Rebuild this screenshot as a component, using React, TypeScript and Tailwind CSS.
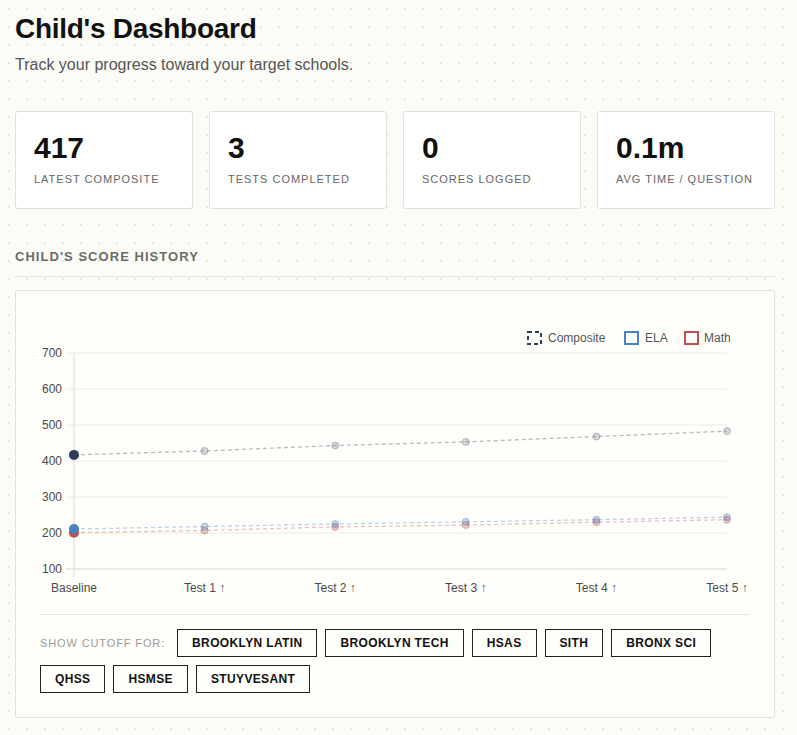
import React from "react"

const stats = [
  { value: "417", label: "Latest Composite" },
  { value: "3", label: "Tests Completed" },
  { value: "0", label: "Scores Logged" },
  { value: "0.1m", label: "Avg Time / Question" },
]

const labels = ["Baseline", "Test 1 ↑", "Test 2 ↑", "Test 3 ↑", "Test 4 ↑", "Test 5 ↑"]
const composite = [417, 428, 443, 453, 468, 483]
const ela = [211, 218, 225, 231, 237, 244]
const math = [201, 207, 217, 222, 230, 237]

const schools = ["Brooklyn Latin", "Brooklyn Tech", "HSAS", "SITH", "Bronx Sci", "QHSS", "HSMSE", "Stuyvesant"]

const x0 = 34
const x1 = 687
const xs = labels.map((_, i) => x0 + ((x1 - x0) * i) / 5)
const yOf = (v: number) => 38 + (700 - v) * 0.36

function Series({ data, color, opacity = 0.35 }: { data: number[]; color: string; opacity?: number }) {
  const pts = data.map((v, i) => `${xs[i]},${yOf(v)}`).join(" ")
  return (
    <g>
      <polyline points={pts} fill="none" stroke={color} strokeOpacity={opacity} strokeWidth={1.3} strokeDasharray="4 3" />
      {data.slice(1).map((v, i) => (
        <circle key={i} cx={xs[i + 1]} cy={yOf(v)} r={3.5} fill={color} fillOpacity={0.3} stroke={color} strokeOpacity={0.4} />
      ))}
    </g>
  )
}

function ScoreChart() {
  const font = { fontFamily: '"Liberation Sans", Arial, sans-serif' }
  return (
    <svg width="710" height="286" viewBox="0 0 710 286" style={font} className="block">
      {/* legend */}
      <g fontSize="12" fill="#555">
        <rect x="488" y="17" width="13" height="12" fill="none" stroke="#2f3e56" strokeWidth="2" strokeDasharray="4 3" />
        <text x="508" y="27">Composite</text>
        <rect x="585" y="17" width="13" height="12" fill="#fff" stroke="#4a7fc1" strokeWidth="2" />
        <text x="605" y="27">ELA</text>
        <rect x="645" y="17" width="13" height="12" fill="#fff" stroke="#c0504d" strokeWidth="2" />
        <text x="664" y="27">Math</text>
      </g>

      {/* grid */}
      {[700, 600, 500, 400, 300, 200, 100].map((v) => (
        <g key={v}>
          <line x1={x0 - 8} x2={x1} y1={yOf(v)} y2={yOf(v)} stroke={v === 100 ? "#d4d4d0" : "#ebebe6"} strokeWidth="1" />
          <text x="22" y={yOf(v) + 4} fontSize="12" fill="#4a4a4a" textAnchor="end">
            {v}
          </text>
        </g>
      ))}
      <line x1={x0} x2={x0} y1={yOf(700)} y2={yOf(100) + 8} stroke="#dcdcd8" strokeWidth="1" />

      {/* x labels */}
      {labels.map((l, i) => (
        <text key={l} x={xs[i]} y="277" fontSize="12" fill="#4a4a4a" textAnchor="middle">
          {l}
        </text>
      ))}

      <Series data={math} color="#c0504d" />
      <Series data={ela} color="#4a7fc1" />
      <Series data={composite} color="#6f7888" opacity={0.5} />

      <circle cx={xs[0]} cy={yOf(math[0])} r={5} fill="#c0504d" />
      <circle cx={xs[0]} cy={yOf(ela[0])} r={5} fill="#4a7fc1" />
      <circle cx={xs[0]} cy={yOf(composite[0])} r={5} fill="#2f3e56" />
    </svg>
  )
}

export default function App() {
  return (
    <div className="min-h-screen bg-[#fcfcf6] bg-[radial-gradient(#e6e6dc_1px,transparent_1px)] bg-[length:18px_18px] font-['Liberation_Sans',Arial,sans-serif] text-[#111]">
      <div className="px-[15px] pt-3 pb-4 w-[790px]">
        <h1 className="text-[28px] leading-[34px] font-bold tracking-[-0.01em] text-[#111]">Child's Dashboard</h1>
        <p className="mt-[7px] text-[16px] leading-6 text-[#555]">Track your progress toward your target schools.</p>

        <div className="mt-[34px] grid grid-cols-4 gap-4 w-[760px]">
          {stats.map((s) => (
            <div key={s.label} className="bg-white border border-[#e2e2dd] rounded-[3px] px-[18px] pt-[21px] pb-[21px]">
              <div className="text-[30px] leading-[30px] font-bold text-[#111]">{s.value}</div>
              <div className="mt-2 text-[11px] leading-4 uppercase tracking-[0.09em] text-[#666]">{s.label}</div>
            </div>
          ))}
        </div>

        <div className="mt-10 w-[760px] border-b border-[#e4e4de] pb-[11px]">
          <h2 className="text-[13px] leading-4 font-bold uppercase tracking-[0.08em] text-[#6b6b66]">Child's Score History</h2>
        </div>

        <div className="mt-[13px] w-[760px] bg-[#fefefa] border border-[#e2e2dd] rounded-[3px] px-6 pt-6 pb-6">
          <ScoreChart />
          <div className="mt-[13px] border-t border-[#e6e6e0] pt-[14px] flex flex-wrap items-center gap-x-2 gap-y-2">
            <span className="mr-[4px] text-[11px] uppercase tracking-[0.08em] text-[#9a9a96]">Show cutoff for:</span>
            {schools.map((s) => (
              <button
                key={s}
                className="h-7 px-[14px] border-[1.5px] border-[#222] bg-transparent text-[12px] font-bold uppercase tracking-[0.03em] text-[#111]"
              >
                {s}
              </button>
            ))}
          </div>
        </div>
      </div>
    </div>
  )
}
